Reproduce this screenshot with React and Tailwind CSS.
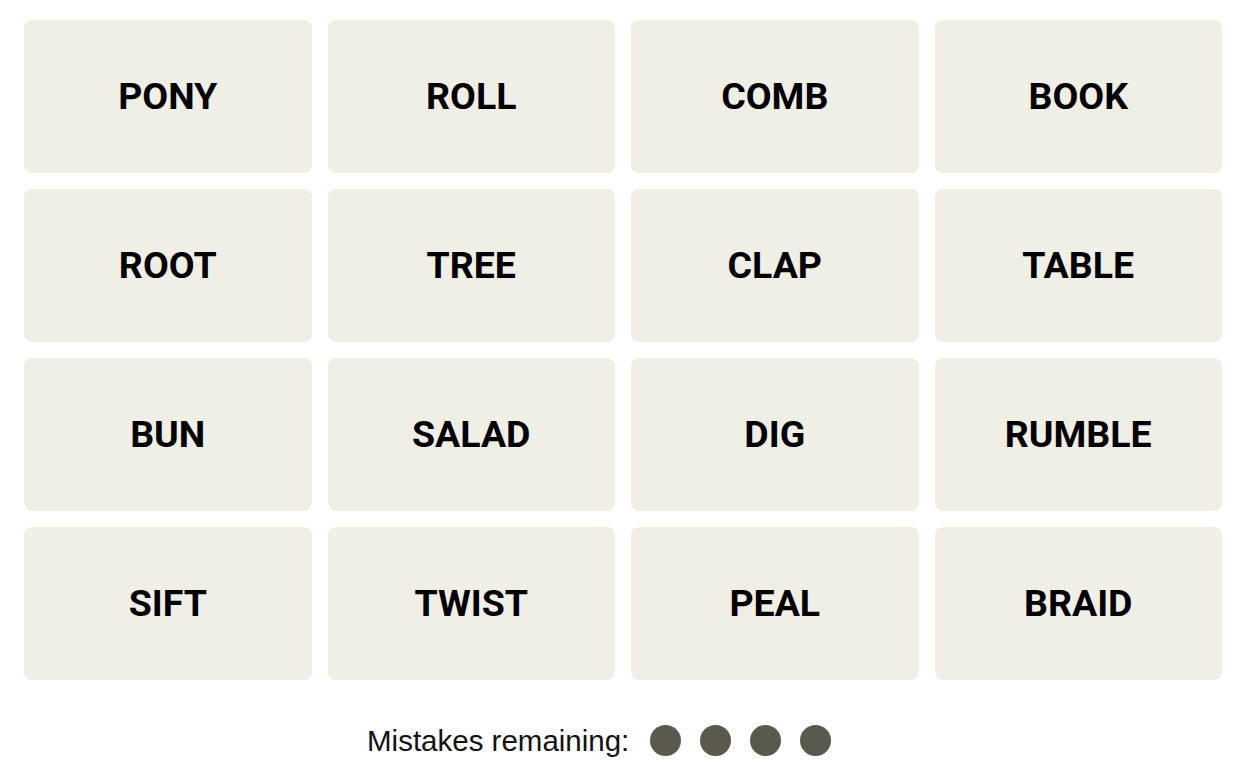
import React from "react";

const words = [
  "PONY", "ROLL", "COMB", "BOOK",
  "ROOT", "TREE", "CLAP", "TABLE",
  "BUN", "SALAD", "DIG", "RUMBLE",
  "SIFT", "TWIST", "PEAL", "BRAID",
];

export default function App() {
  return (
    <div className="w-[1250px] h-[777px] bg-white overflow-hidden" style={{ fontFamily: '"Liberation Sans", Arial, sans-serif' }}>
      <div className="ml-[24px] mt-[20px] w-[1198px] grid grid-cols-4 gap-x-[16px] gap-y-[16px]">
        {words.map((w) => (
          <div
            key={w}
            className="h-[153px] rounded-[8px] bg-[#efefe6] flex items-center justify-center text-black font-bold text-[37.5px] leading-none font-['Roboto',sans-serif]"
          >
            {w}
          </div>
        ))}
      </div>
      <div className="mt-[45px] pl-[367px] flex items-center h-[31px]">
        <span className="text-[29.5px] text-[#121212] leading-none">Mistakes remaining:</span>
        <div className="flex gap-[19px] ml-[21px]">
          <span className="w-[31px] h-[31px] rounded-full bg-[#5a594e]" />
          <span className="w-[31px] h-[31px] rounded-full bg-[#5a594e]" />
          <span className="w-[31px] h-[31px] rounded-full bg-[#5a594e]" />
          <span className="w-[31px] h-[31px] rounded-full bg-[#5a594e]" />
        </div>
      </div>
    </div>
  );
}
